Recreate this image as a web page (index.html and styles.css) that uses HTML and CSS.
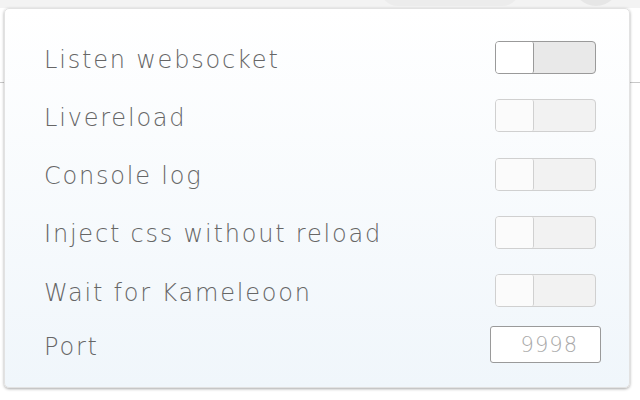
FILE: index.html
```html
<!DOCTYPE html>
<html>
<head>
<meta charset="utf-8">
<link rel="stylesheet" href="styles.css">
</head>
<body>
<div class="page">
  <div class="topbar">
    <div class="pill"></div>
    <div class="circle"></div>
  </div>
  <div class="rule"></div>
</div>
<div class="popup">
  <div class="row">
    <span class="label">Listen websocket</span>
    <span class="toggle active"><span class="knob"></span></span>
  </div>
  <div class="row">
    <span class="label">Livereload</span>
    <span class="toggle"><span class="knob"></span></span>
  </div>
  <div class="row">
    <span class="label">Console log</span>
    <span class="toggle"><span class="knob"></span></span>
  </div>
  <div class="row">
    <span class="label">Inject css without reload</span>
    <span class="toggle"><span class="knob"></span></span>
  </div>
  <div class="row">
    <span class="label">Wait for Kameleoon</span>
    <span class="toggle"><span class="knob"></span></span>
  </div>
  <div class="row port">
    <span class="label">Port</span>
    <input class="port-input" type="text" placeholder="9998">
  </div>
</div>
</body>
</html>
```

FILE: styles.css
```css
html, body {
  margin: 0;
  padding: 0;
  width: 640px;
  height: 400px;
  overflow: hidden;
  background: #ffffff;
  font-family: "DejaVu Sans", "Open Sans", sans-serif;
}
.page {
  position: relative;
  height: 400px;
}
.topbar {
  height: 8px;
  background: #f3f3f3;
  position: relative;
  overflow: hidden;
}
.pill {
  position: absolute;
  left: 380px;
  top: -30px;
  width: 140px;
  height: 36px;
  border-radius: 18px;
  background: #ececec;
}
.circle {
  position: absolute;
  left: 573px;
  top: -40px;
  width: 46px;
  height: 46px;
  border-radius: 50%;
  background: #e6e6e6;
}
.rule {
  margin-top: 74px;
  height: 1px;
  background: #c8c8c8;
}
.popup {
  position: absolute;
  left: 4px;
  top: 8px;
  width: 626px;
  height: 380px;
  box-sizing: border-box;
  border-radius: 5px;
  border: 1px solid #e2e2e2;
  background: linear-gradient(to bottom, #ffffff 0%, #f0f6fb 100%);
  box-shadow: 0 1px 3px rgba(0,0,0,0.35);
  padding: 32px 33px 0 39px;
  display: flex;
  flex-direction: column;
  gap: 25.3px;
}
.row {
  display: flex;
  align-items: center;
  justify-content: space-between;
  height: 33px;
}
.label {
  font-size: 24px;
  font-weight: 200;
  color: #666666;
  letter-spacing: 1.8px;
  line-height: 33px;
  padding-top: 5px;
}
.toggle {
  width: 101px;
  height: 33px;
  box-sizing: border-box;
  border: 1.5px solid #d0d0d0;
  border-radius: 4px;
  background: #f2f2f2;
  display: flex;
}
.toggle.active {
  border-color: #9a9a9a;
  background: #e9e9e9;
}
.knob {
  width: 38px;
  height: 100%;
  box-sizing: border-box;
  background: #fbfbfb;
  border-right: 1.5px solid #d0d0d0;
  border-radius: 3px 2px 2px 3px;
}
.toggle.active .knob {
  background: #ffffff;
  border-right-color: #9a9a9a;
}
.row.port {
  margin-top: -6px;
  height: 37px;
  margin-right: -5px;
}
.port-input {
  width: 111px;
  height: 37px;
  box-sizing: border-box;
  border: 1.5px solid #9a9a9a;
  border-radius: 3px;
  background: #ffffff;
  font-family: "DejaVu Sans", "Open Sans", sans-serif;
  font-weight: 200;
  font-size: 21px;
  text-align: right;
  padding: 0 22px 0 8px;
  color: #777;
  outline: none;
}
.port-input::placeholder {
  color: #a8a8a8;
  letter-spacing: 1px;
}
```
